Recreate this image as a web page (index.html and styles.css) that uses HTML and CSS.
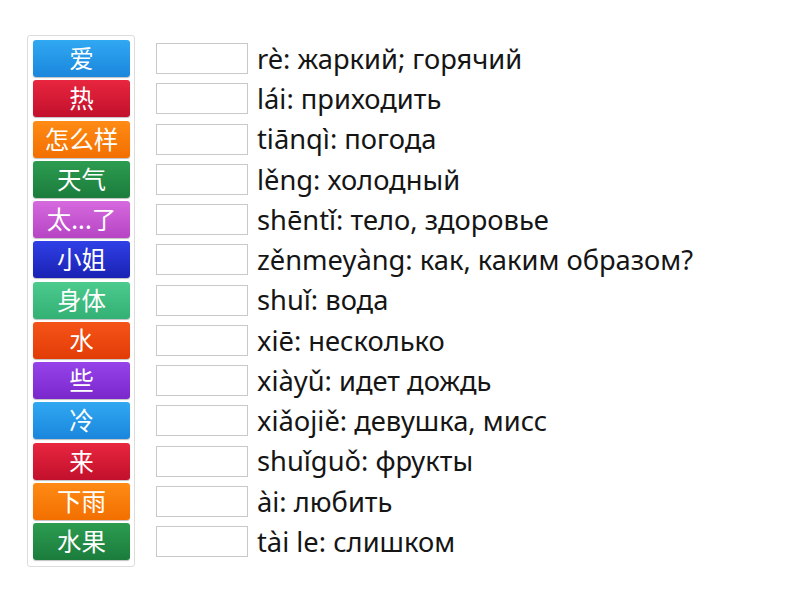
FILE: index.html
```html
<!DOCTYPE html>
<html lang="ru">
<head>
<meta charset="utf-8">
<link rel="stylesheet" href="styles.css">
</head>
<body>
<div class="game">
  <div class="bank">
    <div class="tile c-blue">爱</div>
    <div class="tile c-red">热</div>
    <div class="tile c-orange">怎么样</div>
    <div class="tile c-green">天气</div>
    <div class="tile c-pink">太...了</div>
    <div class="tile c-navy">小姐</div>
    <div class="tile c-mint">身体</div>
    <div class="tile c-vermil">水</div>
    <div class="tile c-violet">些</div>
    <div class="tile c-blue">冷</div>
    <div class="tile c-red">来</div>
    <div class="tile c-orange">下雨</div>
    <div class="tile c-green">水果</div>
  </div>
  <div class="rows">
    <div class="row"><div class="slot"></div><span class="def">rè: жаркий; горячий</span></div>
    <div class="row"><div class="slot"></div><span class="def">lái: приходить</span></div>
    <div class="row"><div class="slot"></div><span class="def">tiānqì: погода</span></div>
    <div class="row"><div class="slot"></div><span class="def">lěng: холодный</span></div>
    <div class="row"><div class="slot"></div><span class="def">shēntǐ: тело, здоровье</span></div>
    <div class="row"><div class="slot"></div><span class="def">zěnmeyàng: как, каким образом?</span></div>
    <div class="row"><div class="slot"></div><span class="def">shuǐ: вода</span></div>
    <div class="row"><div class="slot"></div><span class="def">xiē: несколько</span></div>
    <div class="row"><div class="slot"></div><span class="def">xiàyǔ: идет дождь</span></div>
    <div class="row"><div class="slot"></div><span class="def">xiǎojiě: девушка, мисс</span></div>
    <div class="row"><div class="slot"></div><span class="def">shuǐguǒ: фрукты</span></div>
    <div class="row"><div class="slot"></div><span class="def">ài: любить</span></div>
    <div class="row"><div class="slot"></div><span class="def">tài le: слишком</span></div>
  </div>
</div>
</body>
</html>
```
FILE: styles.css
```css
html, body {
  margin: 0;
  padding: 0;
  background: #ffffff;
}
.game {
  display: flex;
  align-items: flex-start;
  padding: 35px 0 0 27px;
}
.bank {
  display: flex;
  flex-direction: column;
  gap: 3.25px;
  padding: 4px 4px 6px 5px;
  border: 1px solid #dcdcdc;
  border-radius: 3px;
  width: 97px;
}
.tile {
  height: 37px;
  border-radius: 3px;
  color: #ffffff;
  font-family: "Noto Sans CJK SC", "Noto Sans", sans-serif;
  font-size: 24.5px;
  line-height: 36px;
  text-align: center;
  box-shadow: 0 1px 1px rgba(0,0,0,0.25);
  white-space: nowrap;
}
.c-blue   { background: linear-gradient(#31a8f2, #1a86dc); }
.c-red    { background: linear-gradient(#e8263f, #c2102c); }
.c-orange { background: linear-gradient(#ff8b15, #f26f00); }
.c-green  { background: linear-gradient(#2c9c50, #1b7c3c); }
.c-pink   { background: linear-gradient(#d66ade, #b644c4); }
.c-navy   { background: linear-gradient(#3040e6, #1a22b4); }
.c-mint   { background: linear-gradient(#4ccb8e, #33b073); }
.c-vermil { background: linear-gradient(#f55418, #e23c06); }
.c-violet { background: linear-gradient(#9644ea, #7a28cc); }
.rows {
  display: flex;
  flex-direction: column;
  gap: 3.25px;
  padding-top: 5px;
  margin-left: 21px;
}
.row {
  display: flex;
  align-items: center;
  height: 37px;
}
.slot {
  width: 90px;
  height: 29px;
  border: 1px solid #c9c9c9;
  background: #ffffff;
  flex: none;
}
.def {
  margin-left: 9px;
  font-family: "Noto Sans", sans-serif;
  font-size: 27.3px;
  line-height: 1;
  color: #151515;
  white-space: nowrap;
}
```
